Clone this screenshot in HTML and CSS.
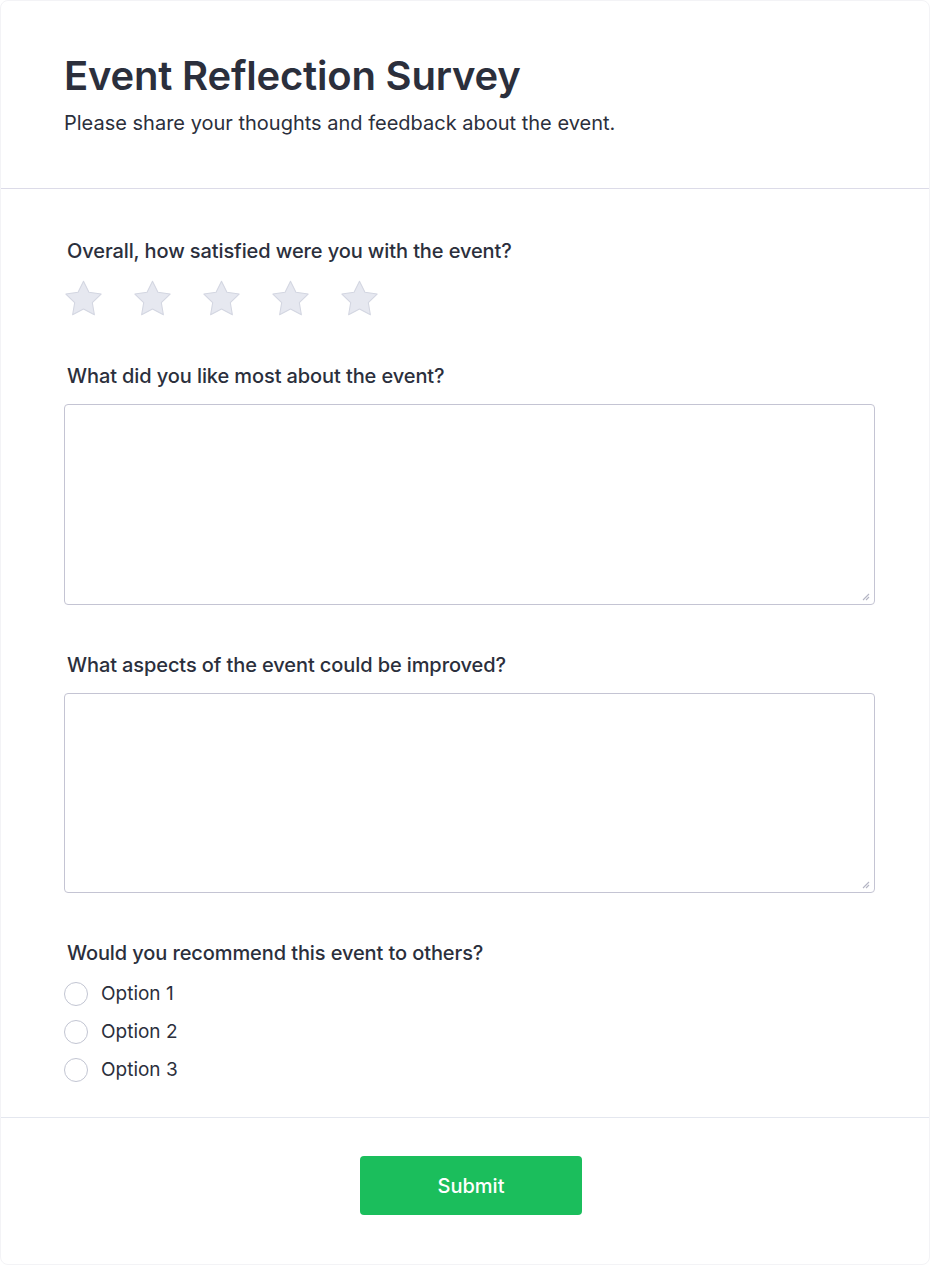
FILE: index.html
```html
<!DOCTYPE html>
<html lang="en">
<head>
<meta charset="utf-8">
<title>Event Reflection Survey</title>
<link rel="stylesheet" href="styles.css">
</head>
<body>
<div class="card">
  <header class="card-header">
    <h1 class="title">Event Reflection Survey</h1>
    <p class="subtitle">Please share your thoughts and feedback about the event.</p>
  </header>
  <form class="card-body">
    <div class="question">
      <label class="q-label">Overall, how satisfied were you with the event?</label>
      <div class="stars">
        <svg class="star" viewBox="1.5 1.5 21 20" width="37" height="36"><path d="M12 2l3.09 6.26L22 9.27l-5 4.87 1.18 6.88L12 17.77l-6.18 3.25L7 14.14 2 9.27l6.91-1.01L12 2z"/></svg>
        <svg class="star" viewBox="1.5 1.5 21 20" width="37" height="36"><path d="M12 2l3.09 6.26L22 9.27l-5 4.87 1.18 6.88L12 17.77l-6.18 3.25L7 14.14 2 9.27l6.91-1.01L12 2z"/></svg>
        <svg class="star" viewBox="1.5 1.5 21 20" width="37" height="36"><path d="M12 2l3.09 6.26L22 9.27l-5 4.87 1.18 6.88L12 17.77l-6.18 3.25L7 14.14 2 9.27l6.91-1.01L12 2z"/></svg>
        <svg class="star" viewBox="1.5 1.5 21 20" width="37" height="36"><path d="M12 2l3.09 6.26L22 9.27l-5 4.87 1.18 6.88L12 17.77l-6.18 3.25L7 14.14 2 9.27l6.91-1.01L12 2z"/></svg>
        <svg class="star" viewBox="1.5 1.5 21 20" width="37" height="36"><path d="M12 2l3.09 6.26L22 9.27l-5 4.87 1.18 6.88L12 17.77l-6.18 3.25L7 14.14 2 9.27l6.91-1.01L12 2z"/></svg>
      </div>
    </div>
    <div class="question">
      <label class="q-label">What did you like most about the event?</label>
      <div class="field">
        <textarea class="answer"></textarea>
        <svg class="grip" viewBox="0 0 10 10" width="10" height="10"><path d="M9 3L3 9M9 6L6 9"/></svg>
      </div>
    </div>
    <div class="question">
      <label class="q-label">What aspects of the event could be improved?</label>
      <div class="field">
        <textarea class="answer answer-b"></textarea>
        <svg class="grip" viewBox="0 0 10 10" width="10" height="10"><path d="M9 3L3 9M9 6L6 9"/></svg>
      </div>
    </div>
    <div class="question">
      <label class="q-label">Would you recommend this event to others?</label>
      <div class="options">
        <label class="option"><span class="radio"></span><span>Option 1</span></label>
        <label class="option"><span class="radio"></span><span>Option 2</span></label>
        <label class="option"><span class="radio"></span><span>Option 3</span></label>
      </div>
    </div>
  </form>
  <footer class="card-footer">
    <button class="submit" type="button">Submit</button>
  </footer>
</div>
</body>
</html>
```

FILE: styles.css
```css
* { box-sizing: border-box; }
html, body { margin: 0; padding: 0; background: #ffffff; }
body {
  font-family: Inter, "Noto Sans", "Liberation Sans", sans-serif;
  color: #2b2f3c;
}
.card {
  width: 930px;
  height: 1265px;
  border: 1px solid #f3f3f6;
  border-radius: 8px;
  background: #fff;
  overflow: hidden;
}
.card-header {
  padding: 51px 63px 50px;
  border-bottom: 1px solid #dcdbe8;
}
.title {
  margin: 0;
  font-size: 40px;
  line-height: 48px;
  font-weight: 600;
  color: #2b2f3c;
  letter-spacing: -0.2px;
}
.subtitle {
  margin: 8px 0 0;
  font-size: 20px;
  line-height: 30px;
  font-weight: 400;
  color: #2b2f3c;
}
.card-body {
  padding: 47px 54px 35px 63px;
  display: flex;
  flex-direction: column;
  gap: 45px;
}
.question { display: flex; flex-direction: column; }
.q-label {
  display: block;
  padding-left: 3px;
  font-size: 20px;
  line-height: 30px;
  font-weight: 500;
  letter-spacing: -0.1px;
  color: #2b2f3c;
  margin-bottom: 13px;
}
.stars { display: flex; gap: 32px; padding-left: 1px; padding-top: 1px; }
.star { display: block; }
.star path {
  fill: #e6e8f0;
  stroke: #d3d6e1;
  stroke-width: 0.6;
  stroke-linejoin: round;
}
.field { position: relative; width: 811px; }
.answer {
  display: block;
  width: 811px;
  height: 201px;
  border: 1px solid #c4c4d3;
  border-radius: 4px;
  font-family: inherit;
  font-size: 16px;
  padding: 8px 12px;
  resize: none;
  background: #fff;
  margin: 0;
}
.answer-b { height: 200px; }
.grip {
  position: absolute;
  right: 5px;
  bottom: 4px;
  display: block;
}
.grip path {
  stroke: #b4b5c4;
  stroke-width: 1.1;
  fill: none;
}
.options { display: flex; flex-direction: column; gap: 14px; padding-top: 1px; }
.option {
  display: flex;
  align-items: center;
  gap: 13px;
  font-size: 19px;
  line-height: 24px;
  color: #2b2f3c;
}
.radio {
  width: 24px;
  height: 24px;
  border: 1.5px solid #c2c5d2;
  border-radius: 50%;
  background: #fff;
  flex: none;
}
.card-footer {
  border-top: 1px solid #e4e7ef;
  padding: 38px 0 0 12px;
  display: flex;
  justify-content: center;
}
.submit {
  width: 222px;
  height: 59px;
  border: none;
  border-radius: 4px;
  background: #1bbe5c;
  color: #fff;
  font-family: inherit;
  font-size: 20px;
  font-weight: 500;
  cursor: pointer;
}
```
